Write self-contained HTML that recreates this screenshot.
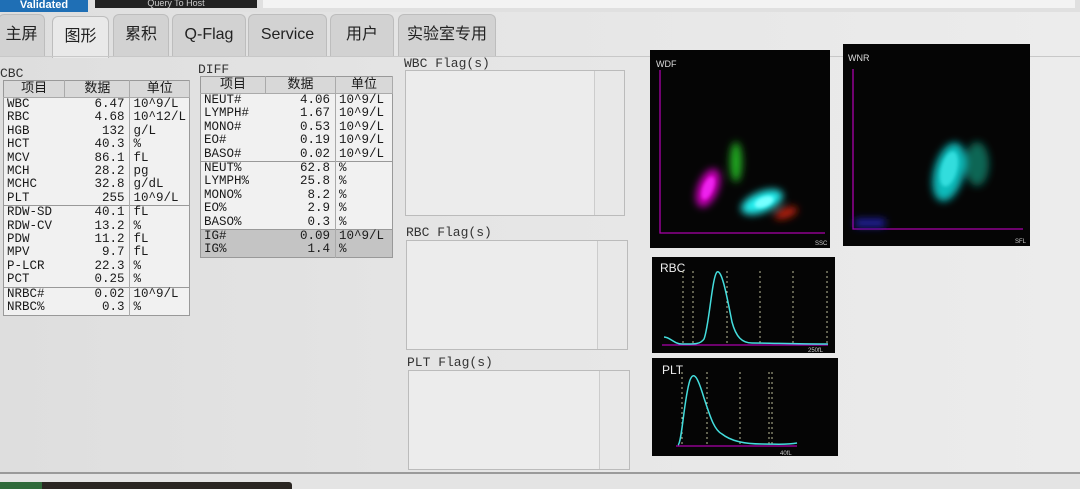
<!DOCTYPE html>
<html><head><meta charset="utf-8"><style>
*{margin:0;padding:0;box-sizing:border-box}
body{width:1080px;height:489px;overflow:hidden;background:linear-gradient(90deg,#dedede,#e6e6e6 50%,#ececec);font-family:"Liberation Sans","Noto Sans CJK SC",sans-serif;position:relative}
.a{position:absolute}
.tab{position:absolute;top:14px;height:42px;background:#d2d2d2;border:1px solid #bdbdbd;border-bottom:none;border-radius:6px 6px 0 0;font-size:16px;color:#222;text-align:center;line-height:40px}
.mono{font-family:"Liberation Mono","Noto Sans CJK SC",monospace;font-size:12.5px;color:#1a1a1a;font-weight:500}
table{border-collapse:collapse;position:absolute;background:#f1f1f1}
td,th{padding:0 3px;height:13.4px;line-height:13.4px;white-space:nowrap}
th{font-weight:normal;background:#d8d8d8;height:17px;font-size:13px;border-right:1px solid #aaa;border-bottom:1px solid #aaa}
td.n{text-align:right;padding-right:5px}
tr.s td{border-top:1px solid #999}
td.u{border-left:1px solid #aaa}
tr.g td{background:#c4c4c4}
.lab{font-family:"Liberation Mono",monospace;font-size:13px;color:#333}
.box{position:absolute;background:#ececec;border:1px solid #bbb}
.sb{position:absolute;right:0;top:0;bottom:0;width:30px;background:#e8e8e8;border-left:1px solid #ccc}
.plot{position:absolute;background:#050505}
</style></head><body>
<div class="a" style="left:0;top:0;width:1080px;height:12px;background:#e0e0e0"></div>
<div class="a" style="left:0;top:0;width:88px;height:12px;background:#1f6fb5;color:#fff;font-size:11px;font-weight:bold;text-align:center;line-height:10px">Validated</div>
<div class="a" style="left:95px;top:0;width:162px;height:8px;background:#222;color:#ccc;font-size:9px;text-align:center;line-height:6px;overflow:hidden">Query To Host</div>
<div class="a" style="left:263px;top:0;width:812px;height:8px;background:#f3f3f3"></div>
<div class="tab" style="left:-2px;width:47px">主屏</div>
<div class="tab" style="left:52px;width:57px;background:#e9e9e9;top:16px;height:42px">图形</div>
<div class="tab" style="left:113px;width:56px">累积</div>
<div class="tab" style="left:172px;width:74px">Q-Flag</div>
<div class="tab" style="left:248px;width:79px">Service</div>
<div class="tab" style="left:330px;width:64px">用户</div>
<div class="tab" style="left:398px;width:98px">实验室专用</div>
<div class="a" style="left:0;top:56px;width:1080px;height:1px;background:#c8c8c8"></div>

<div class="a lab" style="left:0;top:66px">CBC</div>
<table class="mono" style="left:3px;top:80px;width:187px;border:1px solid #999">
<tr><th style="width:62px">项目</th><th style="width:67px">数据</th><th>单位</th></tr>
<tr><td>WBC</td><td class="n">6.47</td><td class="u">10^9/L</td></tr>
<tr><td>RBC</td><td class="n">4.68</td><td class="u">10^12/L</td></tr>
<tr><td>HGB</td><td class="n">132</td><td class="u">g/L</td></tr>
<tr><td>HCT</td><td class="n">40.3</td><td class="u">%</td></tr>
<tr><td>MCV</td><td class="n">86.1</td><td class="u">fL</td></tr>
<tr><td>MCH</td><td class="n">28.2</td><td class="u">pg</td></tr>
<tr><td>MCHC</td><td class="n">32.8</td><td class="u">g/dL</td></tr>
<tr><td>PLT</td><td class="n">255</td><td class="u">10^9/L</td></tr>
<tr class="s"><td>RDW-SD</td><td class="n">40.1</td><td class="u">fL</td></tr>
<tr><td>RDW-CV</td><td class="n">13.2</td><td class="u">%</td></tr>
<tr><td>PDW</td><td class="n">11.2</td><td class="u">fL</td></tr>
<tr><td>MPV</td><td class="n">9.7</td><td class="u">fL</td></tr>
<tr><td>P-LCR</td><td class="n">22.3</td><td class="u">%</td></tr>
<tr><td>PCT</td><td class="n">0.25</td><td class="u">%</td></tr>
<tr class="s"><td>NRBC#</td><td class="n">0.02</td><td class="u">10^9/L</td></tr>
<tr><td>NRBC%</td><td class="n">0.3</td><td class="u">%</td></tr>
</table>

<div class="a lab" style="left:198px;top:62px">DIFF</div>
<table class="mono" style="left:200px;top:76px;width:193px;border:1px solid #999">
<tr><th style="width:65px">项目</th><th style="width:70px">数据</th><th>单位</th></tr>
<tr><td>NEUT#</td><td class="n">4.06</td><td class="u">10^9/L</td></tr>
<tr><td>LYMPH#</td><td class="n">1.67</td><td class="u">10^9/L</td></tr>
<tr><td>MONO#</td><td class="n">0.53</td><td class="u">10^9/L</td></tr>
<tr><td>EO#</td><td class="n">0.19</td><td class="u">10^9/L</td></tr>
<tr><td>BASO#</td><td class="n">0.02</td><td class="u">10^9/L</td></tr>
<tr class="s"><td>NEUT%</td><td class="n">62.8</td><td class="u">%</td></tr>
<tr><td>LYMPH%</td><td class="n">25.8</td><td class="u">%</td></tr>
<tr><td>MONO%</td><td class="n">8.2</td><td class="u">%</td></tr>
<tr><td>EO%</td><td class="n">2.9</td><td class="u">%</td></tr>
<tr><td>BASO%</td><td class="n">0.3</td><td class="u">%</td></tr>
<tr class="s g"><td>IG#</td><td class="n">0.09</td><td class="u">10^9/L</td></tr>
<tr class="g"><td>IG%</td><td class="n">1.4</td><td class="u">%</td></tr>
</table>

<div class="a lab" style="left:404px;top:56px">WBC Flag(s)</div>
<div class="box" style="left:405px;top:70px;width:220px;height:146px"><div class="sb"></div></div>
<div class="a lab" style="left:406px;top:225px">RBC Flag(s)</div>
<div class="box" style="left:406px;top:240px;width:222px;height:110px"><div class="sb"></div></div>
<div class="a lab" style="left:407px;top:355px">PLT Flag(s)</div>
<div class="box" style="left:408px;top:370px;width:222px;height:100px"><div class="sb"></div></div>

<svg class="plot" style="left:650px;top:50px" width="180" height="198">
<defs><filter id="b"><feGaussianBlur stdDeviation="4"/></filter><filter id="c"><feGaussianBlur stdDeviation="1.5"/></filter></defs>
<text x="6" y="17" fill="#ddd" font-size="9" font-family="Liberation Sans">WDF</text>
<path d="M10 20V183H175" stroke="#a0a" fill="none" stroke-width="1.3"/>
<g filter="url(#b)">
<ellipse cx="58" cy="138" rx="10" ry="20" fill="#c0b" transform="rotate(22 58 138)"/>
<ellipse cx="86" cy="112" rx="6" ry="20" fill="#2a2"/>
<ellipse cx="112" cy="152" rx="22" ry="10" fill="#2ee" transform="rotate(-22 112 152)"/>
<ellipse cx="136" cy="163" rx="12" ry="5" fill="#b21" transform="rotate(-20 136 163)"/>
</g>
<g filter="url(#c)">
<ellipse cx="58" cy="138" rx="5" ry="12" fill="#e2e" transform="rotate(22 58 138)"/>
<ellipse cx="114" cy="152" rx="10" ry="5" fill="#7ff" transform="rotate(-22 114 152)"/>
</g>
<text x="165" y="195" fill="#ccc" font-size="6">SSC</text>
</svg>
<svg class="plot" style="left:843px;top:44px" width="187" height="202">
<text x="5" y="17" fill="#ddd" font-size="9" font-family="Liberation Sans">WNR</text>
<path d="M10 25V185H180" stroke="#a0a" fill="none" stroke-width="1.3"/>
<g filter="url(#b)">
<ellipse cx="106" cy="128" rx="15" ry="30" fill="#1bb" transform="rotate(15 106 128)"/>
<ellipse cx="134" cy="120" rx="12" ry="22" fill="#165" />
<rect x="12" y="175" width="30" height="8" fill="#22a"/>
</g>
<g filter="url(#c)"><ellipse cx="106" cy="125" rx="8" ry="18" fill="#3dd" transform="rotate(15 106 125)"/></g>
<text x="172" y="199" fill="#ccc" font-size="6">SFL</text>
</svg>
<svg class="plot" style="left:652px;top:257px" width="183" height="96">
<text x="8" y="15" fill="#eee" font-size="12" font-family="Liberation Sans">RBC</text>
<g stroke="#bb9" stroke-dasharray="2 3" stroke-width="1"><path d="M31 14V88M41 14V88M75 14V88M108 14V88M141 14V88M175 14V88"/></g>
<path d="M10 88H176" stroke="#a0a" stroke-width="1.3"/>
<path d="M12 80C18 80 22 87 30 87C40 87 48 88 52 82C57 70 60 20 65 15C70 12 75 40 80 65C84 80 90 86 100 86C120 86 140 87 176 87" stroke="#4dd" fill="none" stroke-width="1.5"/>
<text x="156" y="95" fill="#ccc" font-size="6">250fL</text>
</svg>
<svg class="plot" style="left:652px;top:358px" width="186" height="98">
<text x="10" y="16" fill="#eee" font-size="12" font-family="Liberation Sans">PLT</text>
<g stroke="#bb9" stroke-dasharray="2 3" stroke-width="1"><path d="M30 14V88M55 14V88M88 14V88M117 14V88M120 14V88"/></g>
<path d="M24 88H145" stroke="#a0a" stroke-width="1.3"/>
<path d="M26 87C30 85 32 40 38 22C42 12 46 20 52 40C58 58 62 72 70 76C80 84 95 86 110 86C125 86 135 87 145 85" stroke="#4dd" fill="none" stroke-width="1.5"/>
<text x="128" y="97" fill="#ccc" font-size="6">40fL</text>
</svg>
<div class="a" style="left:0;top:472px;width:1080px;height:2px;background:#9a9a9a"></div>
<div class="a" style="left:0;top:474px;width:1080px;height:15px;background:#e4e4e4"></div>
<div class="a" style="left:0;top:482px;width:42px;height:7px;background:#2f6a3a"></div>
<div class="a" style="left:42px;top:482px;width:250px;height:7px;background:#2a2622;border-radius:0 3px 0 0"></div>
</body></html>
